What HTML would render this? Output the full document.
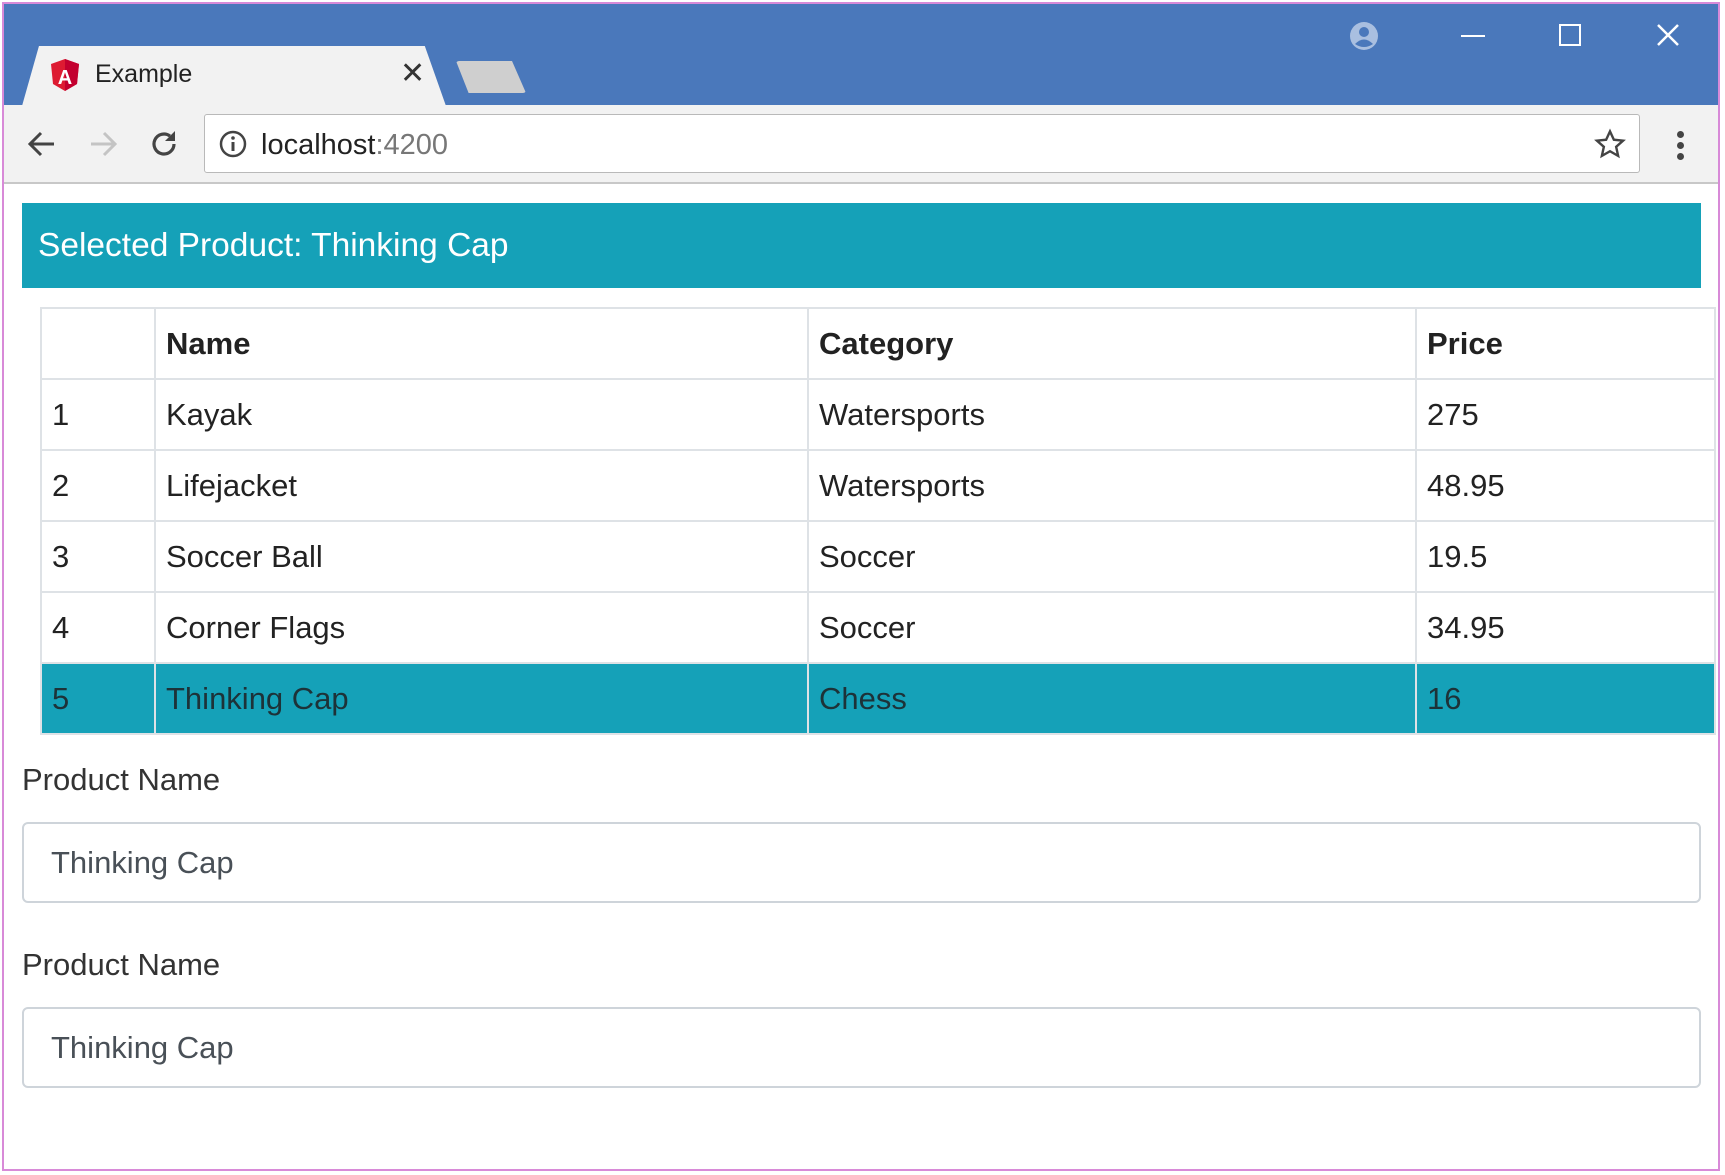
<!DOCTYPE html>
<html><head><meta charset="utf-8"><style>
*{box-sizing:border-box;margin:0;padding:0}
body{width:1725px;height:1175px;background:#fff;position:relative;overflow:hidden;font-family:"Liberation Sans",sans-serif}
.frame{position:absolute;left:2px;top:2px;width:1718px;height:1169px;border:2px solid #d88ad8}
.titlebar{position:absolute;left:4px;top:4px;width:1714px;height:101px;background:#4a78bb}
.tab{position:absolute;left:22px;top:46px;width:424px;height:60px;background:#f2f2f2;clip-path:polygon(4% 0,95% 0,100% 100%,0 100%);}
.newtab{position:absolute;left:456px;top:61px;width:70px;height:32px;background:#cfcfcf;clip-path:polygon(0 0,80% 0,100% 100%,18% 100%);border-radius:3px}
.toolbar{position:absolute;left:4px;top:105px;width:1714px;height:79px;background:#f2f2f2;border-bottom:2px solid #c8c8c8}
.addr{position:absolute;left:204px;top:114px;width:1436px;height:59px;background:#fff;border:1px solid #b9b9b9;border-radius:3px}
.banner{position:absolute;left:22px;top:203px;width:1679px;height:85px;background:#15a1b8;color:#fff;font-size:33.5px;line-height:85px;padding-left:16px}
table{position:absolute;left:40px;top:307px;width:1676px;border-collapse:collapse;font-size:31px;color:#222}
td,th{border:2px solid #dee2e6;height:71px;padding:0 10px;text-align:left;vertical-align:middle}
th{font-weight:bold}
tr.sel td{background:#15a1b8;color:#1d3238}
.lbl{position:absolute;left:22px;font-size:31px;color:#333}
.inp{position:absolute;left:22px;width:1679px;height:81px;border:2px solid #ced4da;border-radius:6px;font-size:31px;color:#495057;line-height:77px;padding-left:27px}
</style></head><body>
<div class="frame"></div>
<div class="titlebar"></div>
<div class="tab"></div>
<div class="newtab"></div>
<svg style="position:absolute;left:50px;top:58px" width="30" height="34" viewBox="0 0 30 34"><path d="M15 1 L29 6 L27 26 L15 33 L3 26 L1 6Z" fill="#dd1b32"/><path d="M15 1 L29 6 L27 26 L15 33Z" fill="#c3002f"/><text x="15" y="26" font-size="20" font-weight="bold" fill="#fff" text-anchor="middle" font-family="Liberation Sans">A</text></svg>
<div style="position:absolute;left:95px;top:60px;font-size:25px;color:#222">Example</div>
<div style="position:absolute;left:400px;top:56px;font-size:30px;color:#333">✕</div>
<svg style="position:absolute;left:1348px;top:20px" width="32" height="32" viewBox="0 0 32 32"><circle cx="16" cy="16" r="14" fill="#a9bfe0"/><circle cx="16" cy="12" r="5" fill="#4a78bb"/><path d="M7 24 Q16 15 25 24 Q16 30 7 24Z" fill="#4a78bb"/></svg>
<div style="position:absolute;left:1461px;top:35px;width:24px;height:2px;background:#fff"></div>
<div style="position:absolute;left:1559px;top:24px;width:22px;height:22px;border:2px solid #fff"></div>
<svg style="position:absolute;left:1656px;top:23px" width="24" height="24"><path d="M2 2L22 22M22 2L2 22" stroke="#fff" stroke-width="2.5"/></svg>
<div class="toolbar"></div>
<svg style="position:absolute;left:26px;top:128px" width="32" height="32"><path d="M28 16H5M15 5L4 16L15 27" stroke="#444" stroke-width="3" fill="none"/></svg>
<svg style="position:absolute;left:87px;top:128px" width="32" height="32"><path d="M4 16H27M17 5L28 16L17 27" stroke="#c4c4c4" stroke-width="3" fill="none"/></svg>
<svg style="position:absolute;left:148px;top:128px" width="32" height="32"><path d="M26 16A10 10 0 1 1 22 8" stroke="#444" stroke-width="3.2" fill="none"/><path d="M27 3V13H17Z" fill="#444"/></svg>
<div class="addr"></div>
<svg style="position:absolute;left:218px;top:129px" width="30" height="30"><circle cx="15" cy="15" r="12" stroke="#444" stroke-width="2.5" fill="none"/><rect x="13.5" y="13" width="3" height="9" fill="#444"/><circle cx="15" cy="9" r="1.8" fill="#444"/></svg>
<div style="position:absolute;left:261px;top:129px;font-size:29px;color:#222">localhost<span style="color:#777">:4200</span></div>
<svg style="position:absolute;left:1594px;top:128px" width="32" height="32" viewBox="0 0 24 24"><path d="M12 2.5l2.9 6.3 6.9.7-5.2 4.6 1.5 6.8L12 17.4 5.9 20.9l1.5-6.8L2.2 9.5l6.9-.7z" fill="none" stroke="#444" stroke-width="1.8"/></svg>
<div style="position:absolute;left:1677px;top:131px;width:7px;height:7px;border-radius:50%;background:#444;box-shadow:0 11px 0 #444,0 22px 0 #444"></div>
<div class="banner">Selected Product: Thinking Cap</div>
<table>
<colgroup><col style="width:114px"><col style="width:653px"><col style="width:608px"><col></colgroup>
<tr><th></th><th>Name</th><th>Category</th><th>Price</th></tr>
<tr><td>1</td><td>Kayak</td><td>Watersports</td><td>275</td></tr>
<tr><td>2</td><td>Lifejacket</td><td>Watersports</td><td>48.95</td></tr>
<tr><td>3</td><td>Soccer Ball</td><td>Soccer</td><td>19.5</td></tr>
<tr><td>4</td><td>Corner Flags</td><td>Soccer</td><td>34.95</td></tr>
<tr class="sel"><td>5</td><td>Thinking Cap</td><td>Chess</td><td>16</td></tr>
</table>
<div class="lbl" style="top:762px">Product Name</div>
<div class="inp" style="top:822px">Thinking Cap</div>
<div class="lbl" style="top:947px">Product Name</div>
<div class="inp" style="top:1007px">Thinking Cap</div>
</body></html>
